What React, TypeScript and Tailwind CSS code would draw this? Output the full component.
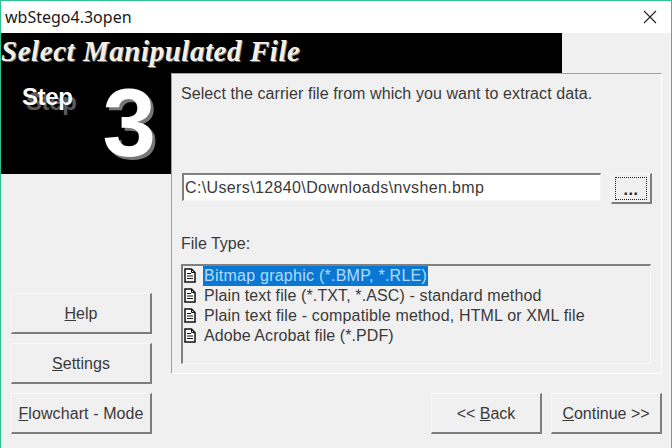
import React from 'react';

const sans = "font-['Liberation_Sans',Arial,sans-serif]";

// raised Win9x style button
const RaisedButton: React.FC<{ className?: string; children: React.ReactNode }> = ({ className = '', children }) => (
  <div className={`flex h-[41px] items-center justify-center border-t border-l border-t-[#f8f8f8] border-l-[#f8f8f8] border-r-2 border-b-2 border-r-[#7d7d7d] border-b-[#7d7d7d] bg-[#f0f0f0] pt-[2px] text-[16px] text-[#3a3a3a] ${className}`}>
    {children}
  </div>
);

const DocIcon: React.FC = () => (
  <svg width="12" height="15" viewBox="0 0 12 15" className="mb-[2px] shrink-0">
    <path d="M1 1H7.5L11 4.5V14H1Z" fill="#fff" stroke="#111" strokeWidth="1.5" />
    <path d="M7.5 1V4.5H11" fill="none" stroke="#111" strokeWidth="1" />
    <path d="M3 5.5H7M3 8H9M3 10.5H9" stroke="#111" strokeWidth="1.2" />
  </svg>
);

const FILE_TYPES = [
  { label: 'Bitmap graphic (*.BMP, *.RLE)', tracking: 'tracking-[0.25px]' },
  { label: 'Plain text file (*.TXT, *.ASC) - standard method', tracking: 'tracking-[0.12px]' },
  { label: 'Plain text file - compatible method, HTML or XML file', tracking: 'tracking-[0.16px]' },
  { label: 'Adobe Acrobat file (*.PDF)', tracking: 'tracking-[0.08px]' },
];

const App: React.FC = () => {
  return (
    <div className={`flex h-[448px] w-[672px] flex-col overflow-hidden border-x border-t border-x-[#2fc48d] border-t-[#2fc48d] bg-[#f0f0f0] ${sans}`}>
      {/* title bar */}
      <div className="flex h-[32px] shrink-0 items-center justify-between bg-white pl-[4px] pr-[14px]">
        <span className="font-['Noto_Sans',sans-serif] text-[16px] text-[#1a1a1a]">wbStego4.3open</span>
        <svg width="14" height="14" viewBox="0 0 14 14">
          <path d="M1 1L13 13M13 1L1 13" stroke="#222" strokeWidth="1.1" fill="none" />
        </svg>
      </div>

      {/* black header strip */}
      <div className="flex h-[40px] w-[561px] shrink-0 items-start bg-black">
        <span className="font-['Liberation_Serif',serif] text-[29px] font-bold italic leading-[36px] tracking-[0.55px] text-[#f4f0e6] [text-shadow:1px_1px_0_#777]">
          Select Manipulated File
        </span>
      </div>

      <div className="flex min-h-0 flex-1">
        {/* left column */}
        <div className="flex w-[170px] shrink-0 flex-col">
          <div className="flex h-[101px] items-start bg-black pl-[21px]">
            <span className="mt-[10px] text-[24px] font-bold leading-[28px] tracking-[-0.4px] text-white [text-shadow:4px_5px_0_#5a5a5a]">Step</span>
            <span className="ml-[30px] mt-[2px] text-[96px] font-bold leading-[96px] text-white [text-shadow:3px_3px_0_#777]">3</span>
          </div>
          <div className="mt-[119px] flex flex-col gap-[9px] pl-[10px]">
            <RaisedButton className="w-[141px]"><span><u>H</u>elp</span></RaisedButton>
            <RaisedButton className="w-[141px]"><span><u>S</u>ettings</span></RaisedButton>
            <RaisedButton className="w-[141px]"><span className="tracking-[0.1px]"><u>F</u>lowchart - Mode</span></RaisedButton>
          </div>
        </div>

        {/* right column */}
        <div className="flex flex-1 flex-col">
          <div className="h-[301px] w-[491px] border-t border-l border-t-[#a0a0a0] border-l-[#a0a0a0] border-b border-r border-b-white border-r-white pl-[9px] pt-[10px] text-[#3a3a3a]">
            <div className="text-[16px] leading-[20px] tracking-[0.08px]">Select the carrier file from which you want to extract data.</div>

            <div className="mt-[69px] flex items-start">
              <div className="ml-[1px] flex h-[28px] w-[419px] items-center border-t-2 border-l-2 border-t-[#808080] border-l-[#808080] border-r border-b border-r-[#f4f4f4] border-b-[#f4f4f4] bg-white pl-[1px] text-[16px] tracking-[0.37px]">
                C:\Users\12840\Downloads\nvshen.bmp
              </div>
              <div className="ml-[10px] flex h-[31px] w-[41px] items-center justify-center border-t border-l border-t-[#f8f8f8] border-l-[#f8f8f8] border-r-2 border-b-2 border-r-[#7d7d7d] border-b-[#7d7d7d]">
                <div className="flex h-[23px] w-[32px] items-end justify-center border border-dotted border-[#222] text-[16px] font-bold leading-[18px] tracking-[0.5px] text-[#222]">...</div>
              </div>
            </div>

            <div className="mt-[30px] text-[16px] leading-[20px]">File Type:</div>

            <div className="mt-[10px] h-[100px] w-[470px] border-t-2 border-l-2 border-t-[#808080] border-l-[#808080] border-r border-b border-r-[#f8f8f8] border-b-[#f8f8f8] text-[16px]">
              {FILE_TYPES.map((item, idx) => (
                <div key={item.label} className="flex h-[20px] items-center pl-[1px]">
                  <DocIcon />
                  <span className={`ml-[7px] px-[1px] leading-[20px] ${item.tracking} ${idx === 0 ? 'bg-[#0a78d2] text-[#b4dcff]' : ''}`}>{item.label}</span>
                </div>
              ))}
            </div>
          </div>

          {/* back / continue */}
          <div className="mt-[19px] flex justify-end gap-[9px] pr-[9px]">
            <RaisedButton className="w-[111px]"><span>&lt;&lt; <u>B</u>ack</span></RaisedButton>
            <RaisedButton className="w-[111px]"><span><u>C</u>ontinue &gt;&gt;</span></RaisedButton>
          </div>
        </div>
      </div>
    </div>
  );
};

export default App;
